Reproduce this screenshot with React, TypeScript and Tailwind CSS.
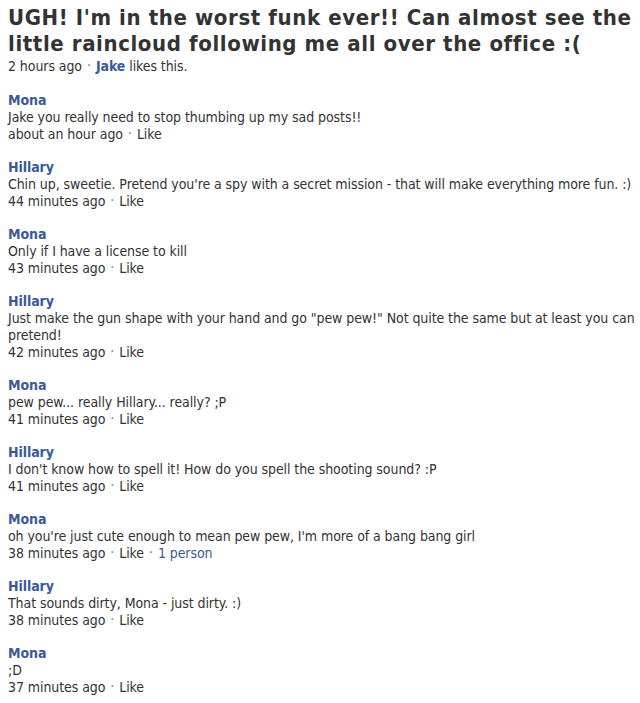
import React from 'react';

type Comment = {
  name: string;
  text: string;
  time: string;
  likes?: string;
};

const comments: Comment[] = [
  { name: 'Mona', text: 'Jake you really need to stop thumbing up my sad posts!!', time: 'about an hour ago' },
  { name: 'Hillary', text: 'Chin up, sweetie. Pretend you\'re a spy with a secret mission - that will make everything more fun. :)', time: '44 minutes ago' },
  { name: 'Mona', text: 'Only if I have a license to kill', time: '43 minutes ago' },
  { name: 'Hillary', text: 'Just make the gun shape with your hand and go "pew pew!" Not quite the same but at least you can pretend!', time: '42 minutes ago' },
  { name: 'Mona', text: 'pew pew... really Hillary... really? ;P', time: '41 minutes ago' },
  { name: 'Hillary', text: 'I don\'t know how to spell it! How do you spell the shooting sound? :P', time: '41 minutes ago' },
  { name: 'Mona', text: 'oh you\'re just cute enough to mean pew pew, I\'m more of a bang bang girl', time: '38 minutes ago', likes: '1 person' },
  { name: 'Hillary', text: 'That sounds dirty, Mona - just dirty. :)', time: '38 minutes ago' },
  { name: 'Mona', text: ';D', time: '37 minutes ago' },
];

const Dot = () => <span className="mx-[5px] text-[#777] relative -top-[1px]">·</span>;

export default function App() {
  return (
    <div className="min-h-screen bg-white pl-2 pr-1 pt-[5px] text-[#333] font-['DejaVu_Sans_Condensed','DejaVu_Sans',sans-serif] text-[14px] tracking-[-0.08px] leading-[17px]">
      <h1 className="-mr-1 text-[22px] leading-[26px] font-bold tracking-[0.6px] text-[#333]">
        UGH! I'm in the worst funk ever!! Can almost see the little raincloud following me all over the office :(
      </h1>
      <div className="mt-[1px]">
        2 hours ago<Dot />
        <span className="font-bold text-[#3b5998]">Jake</span> likes this.
      </div>

      <div className="mt-[17px] flex flex-col gap-[16px]">
        {comments.map((c, i) => (
          <div key={i}>
            <div className="font-bold text-[#3b5998]">{c.name}</div>
            <div>{c.text}</div>
            <div>
              {c.time}
              <Dot />
              Like
              {c.likes && (
                <>
                  <Dot />
                  <span className="text-[#3b5998]">{c.likes}</span>
                </>
              )}
            </div>
          </div>
        ))}
      </div>
    </div>
  );
}
